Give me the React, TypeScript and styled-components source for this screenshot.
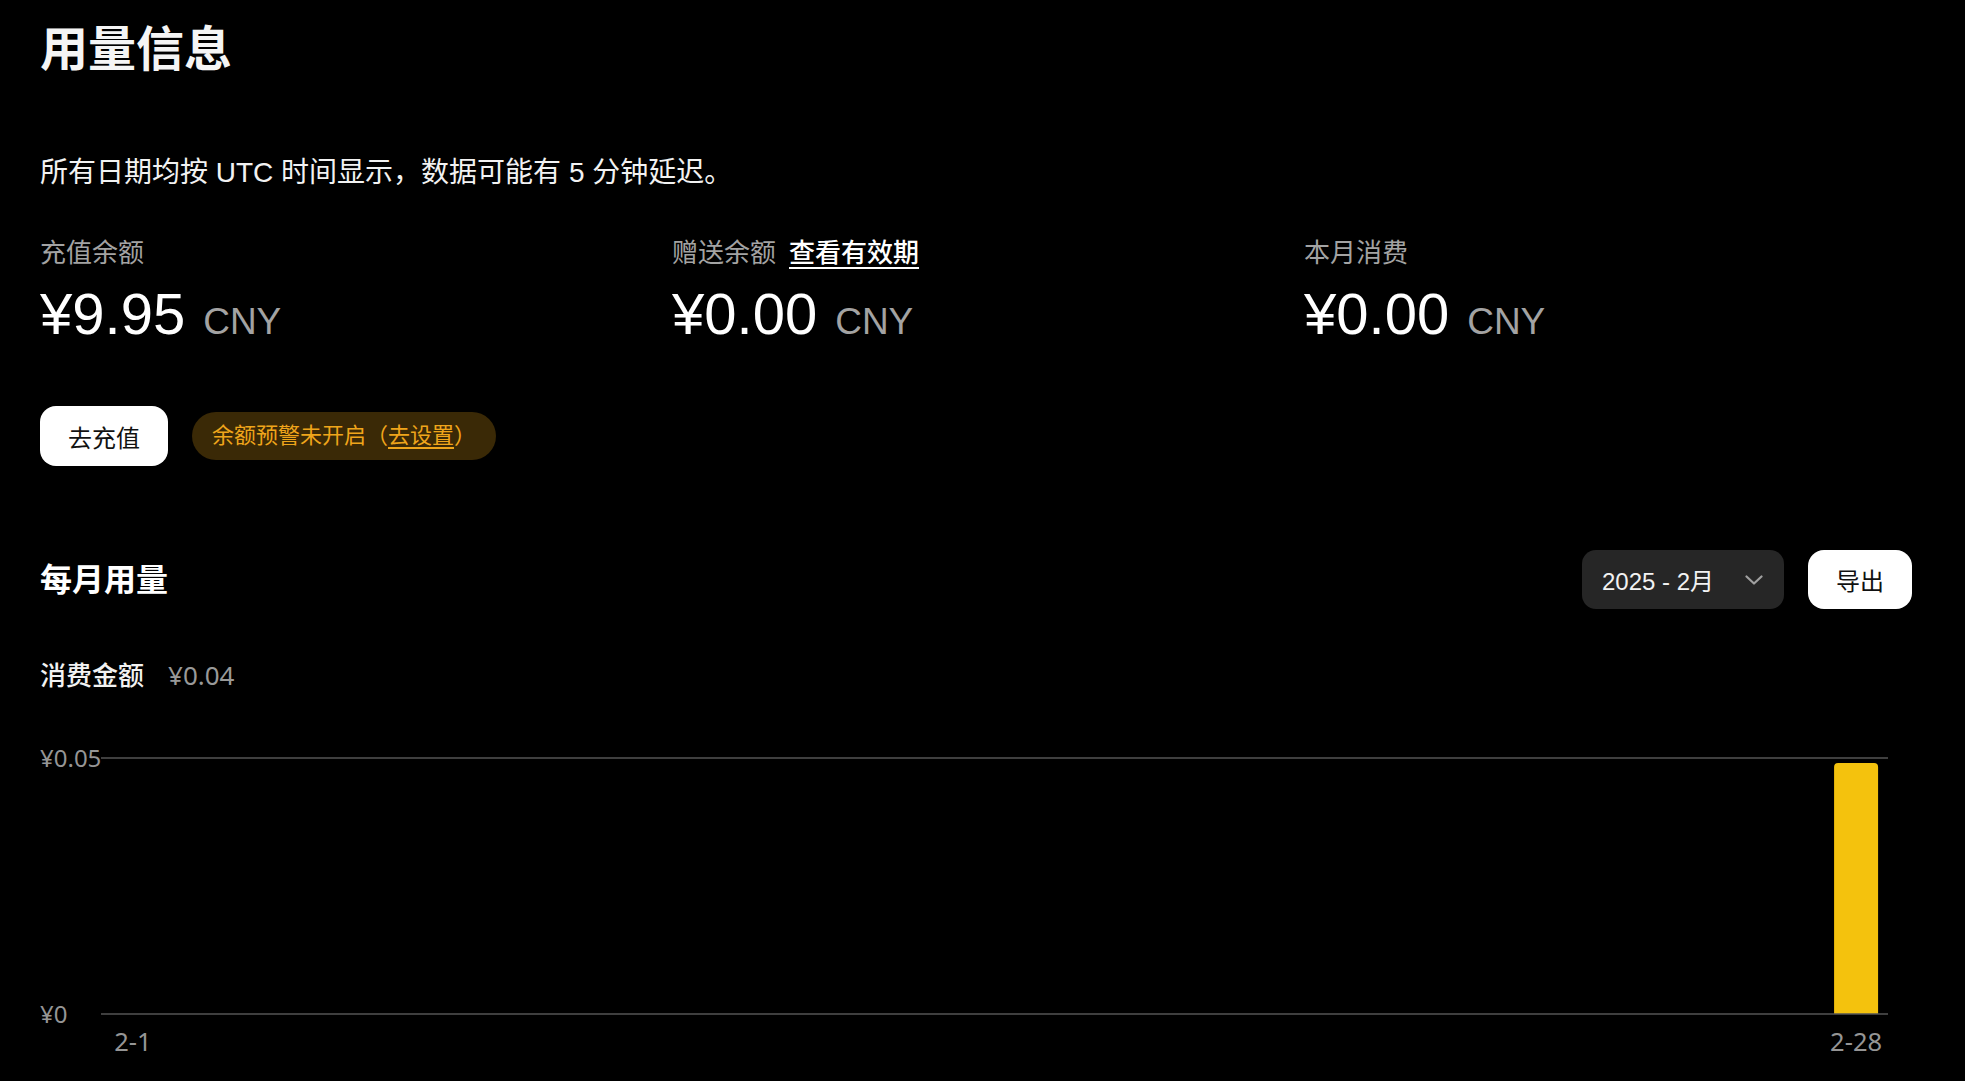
import React from "react";
import styled, { createGlobalStyle } from "styled-components";

const GlobalStyle = createGlobalStyle`
  html, body {
    margin: 0;
    padding: 0;
    background: #000;
    overflow: hidden;
  }
  body {
    font-family: "Liberation Sans", "Noto Sans CJK SC", sans-serif;
    color: #fff;
  }
`;

const Page = styled.main`
  display: flex;
  flex-direction: column;
  padding: 22px 53px 0 40px;
`;

const Title = styled.h1`
  margin: 0;
  font-size: 48px;
  line-height: 56px;
  font-weight: 700;
  color: #f5f5f5;
`;

const Note = styled.p`
  margin: 75px 0 0;
  font-size: 28px;
  line-height: 40px;
  color: #f2f2f2;
`;

const Stats = styled.section`
  margin-top: 42px;
  display: grid;
  grid-template-columns: repeat(3, 1fr);
  column-gap: 24px;
`;

const Stat = styled.div`
  display: flex;
  flex-direction: column;
  gap: 13px;
`;

const StatLabel = styled.div`
  display: flex;
  align-items: center;
  gap: 13px;
  font-size: 26px;
  line-height: 36px;
  color: #a3a3a3;
`;

const LabelLink = styled.a`
  color: #fff;
  font-weight: 500;
  text-decoration: underline;
  text-underline-offset: 5px;
  text-decoration-thickness: 2px;
  cursor: pointer;
`;

const Amount = styled.div`
  display: flex;
  align-items: baseline;
  font-size: 58px;
  line-height: 60px;
  color: #fff;
`;

const Unit = styled.span`
  margin-left: 18px;
  font-size: 37px;
  line-height: 1;
  color: #a3a3a3;
`;

const Actions = styled.div`
  margin-top: 62px;
  display: flex;
  align-items: center;
  gap: 24px;
`;

const SolidButton = styled.button<{ $h: number }>`
  height: ${(p) => p.$h}px;
  padding: 0 28px;
  border: none;
  border-radius: 16px;
  background: #fff;
  color: #111;
  font-family: inherit;
  font-size: 24px;
  cursor: pointer;
`;

const WarnPill = styled.div`
  height: 48px;
  padding: 0 20px;
  border-radius: 24px;
  background: #3a2906;
  color: #efa51b;
  font-size: 22px;
  line-height: 48px;
`;

const WarnLink = styled.a`
  color: inherit;
  text-decoration: underline;
  text-underline-offset: 4px;
  cursor: pointer;
`;

const SectionHeader = styled.div`
  margin-top: 84px;
  display: flex;
  align-items: center;
  justify-content: space-between;
`;

const SectionTitle = styled.h2`
  margin: 0;
  font-size: 32px;
  line-height: 40px;
  font-weight: 700;
`;

const Controls = styled.div`
  display: flex;
  align-items: center;
  gap: 24px;
`;

const MonthSelect = styled.button`
  width: 202px;
  height: 59px;
  padding: 0 21px 0 20px;
  display: flex;
  align-items: center;
  justify-content: space-between;
  border: none;
  border-radius: 14px;
  background: #262626;
  color: #f2f2f2;
  font-family: inherit;
  font-size: 24px;
  cursor: pointer;
`;

const MetricRow = styled.div`
  margin-top: 48px;
  display: flex;
  align-items: baseline;
  gap: 24px;
  font-size: 26px;
  line-height: 36px;
`;

const MetricName = styled.span`
  color: #f2f2f2;
  font-weight: 500;
`;

const MetricValue = styled.span`
  font-family: "Noto Sans", "Liberation Sans", sans-serif;
  color: #999;
`;

const ChartWrap = styled.div`
  margin-top: 44px;
  height: 330px;
`;

const AXIS_FONT = `"Noto Sans", "Liberation Sans", sans-serif`;

function Chevron() {
  return (
    <svg width="18" height="10" viewBox="0 0 18 10" fill="none">
      <path d="M1.5 1.5L9 8.5L16.5 1.5" stroke="#a0a0a0" strokeWidth="2.2" strokeLinecap="round" strokeLinejoin="round" />
    </svg>
  );
}

const days = Array.from({ length: 28 }, (_, i) => (i === 27 ? 0.049 : 0));

function UsageChart() {
  const W = 1872;
  const plotL = 61;
  const plotR = 1848;
  const top = 20;
  const bottom = 276;
  const max = 0.05;
  const slot = (plotR - plotL) / days.length;
  const barW = 44;
  const r = 4;
  return (
    <svg width={W} height={330} viewBox={`0 0 ${W} 330`}>
      <line x1={plotL} x2={plotR} y1={top} y2={top} stroke="#555" strokeWidth={1.5} />
      <text x={0} y={top + 8.5} fill="#959595" fontSize={24} fontFamily={AXIS_FONT}>
        ¥0.05
      </text>
      <text x={0} y={bottom + 8.5} fill="#959595" fontSize={24} fontFamily={AXIS_FONT}>
        ¥0
      </text>
      {days.map((v, i) => {
        if (v <= 0) return null;
        const h = (v / max) * (bottom - top);
        const x = plotL + i * slot + (slot - barW) / 2;
        const y = bottom - h;
        const d = `M${x} ${bottom} V${y + r} Q${x} ${y} ${x + r} ${y} H${x + barW - r} Q${x + barW} ${y} ${x + barW} ${y + r} V${bottom} Z`;
        return <path key={i} d={d} fill="#f4c20d" />;
      })}
      <line x1={plotL} x2={plotR} y1={bottom} y2={bottom} stroke="#555" strokeWidth={1.5} />
      {[0, 27].map((i) => (
        <text
          key={i}
          x={plotL + (i + 0.5) * slot}
          y={bottom + 37}
          fill="#959595"
          fontSize={25.5}
          fontFamily={AXIS_FONT}
          textAnchor="middle"
        >
          {`2-${i + 1}`}
        </text>
      ))}
    </svg>
  );
}

export default function App() {
  return (
    <>
      <GlobalStyle />
      <Page>
        <Title>用量信息</Title>
        <Note>所有日期均按 UTC 时间显示，数据可能有 5 分钟延迟。</Note>
        <Stats>
          <Stat>
            <StatLabel>充值余额</StatLabel>
            <Amount>
              ¥9.95<Unit>CNY</Unit>
            </Amount>
          </Stat>
          <Stat>
            <StatLabel>
              赠送余额<LabelLink>查看有效期</LabelLink>
            </StatLabel>
            <Amount>
              ¥0.00<Unit>CNY</Unit>
            </Amount>
          </Stat>
          <Stat>
            <StatLabel>本月消费</StatLabel>
            <Amount>
              ¥0.00<Unit>CNY</Unit>
            </Amount>
          </Stat>
        </Stats>
        <Actions>
          <SolidButton $h={60}>去充值</SolidButton>
          <WarnPill>
            余额预警未开启（<WarnLink>去设置</WarnLink>）
          </WarnPill>
        </Actions>
        <SectionHeader>
          <SectionTitle>每月用量</SectionTitle>
          <Controls>
            <MonthSelect>
              <span>2025 - 2月</span>
              <Chevron />
            </MonthSelect>
            <SolidButton $h={59}>导出</SolidButton>
          </Controls>
        </SectionHeader>
        <MetricRow>
          <MetricName>消费金额</MetricName>
          <MetricValue>¥0.04</MetricValue>
        </MetricRow>
        <ChartWrap>
          <UsageChart />
        </ChartWrap>
      </Page>
    </>
  );
}
